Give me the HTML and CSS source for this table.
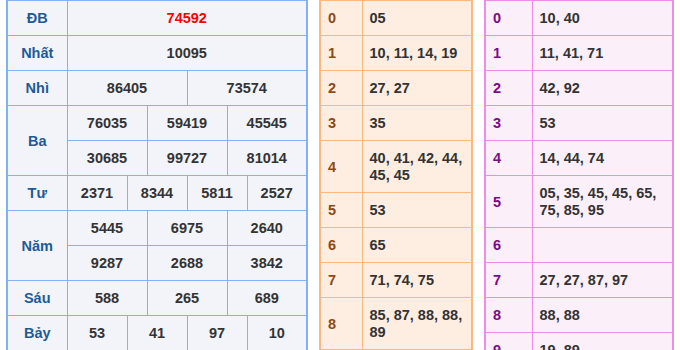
FILE: index.html
```html
<!DOCTYPE html>
<html lang="vi">
<head>
  <meta charset="UTF-8">
  <title>Kết quả xổ số miền Bắc</title>
  <link rel="stylesheet" href="styles.css">
</head>
<body>

  <div class="board">

    <table class="kq">
      <colgroup>
        <col class="col-label">
        <col><col><col><col><col><col><col><col><col><col><col><col>
      </colgroup>
      <tr><th>ĐB</th><td colspan="12" class="db">74592</td></tr>
      <tr><th>Nhất</th><td colspan="12">10095</td></tr>
      <tr><th>Nhì</th><td colspan="6">86405</td><td colspan="6">73574</td></tr>
      <tr><th rowspan="2">Ba</th><td colspan="4">76035</td><td colspan="4">59419</td><td colspan="4">45545</td></tr>
      <tr><td colspan="4">30685</td><td colspan="4">99727</td><td colspan="4">81014</td></tr>
      <tr><th>Tư</th><td colspan="3">2371</td><td colspan="3">8344</td><td colspan="3">5811</td><td colspan="3">2527</td></tr>
      <tr><th rowspan="2">Năm</th><td colspan="4">5445</td><td colspan="4">6975</td><td colspan="4">2640</td></tr>
      <tr><td colspan="4">9287</td><td colspan="4">2688</td><td colspan="4">3842</td></tr>
      <tr><th>Sáu</th><td colspan="4">588</td><td colspan="4">265</td><td colspan="4">689</td></tr>
      <tr><th>Bảy</th><td colspan="3">53</td><td colspan="3">41</td><td colspan="3">97</td><td colspan="3">10</td></tr>
    </table>

    <table class="loto dau">
      <colgroup><col class="col-num"><col></colgroup>
      <tr><th>0</th><td>05</td></tr>
      <tr><th>1</th><td>10, 11, 14, 19</td></tr>
      <tr><th>2</th><td>27, 27</td></tr>
      <tr><th>3</th><td>35</td></tr>
      <tr><th>4</th><td>40, 41, 42, 44, 45, 45</td></tr>
      <tr><th>5</th><td>53</td></tr>
      <tr><th>6</th><td>65</td></tr>
      <tr><th>7</th><td>71, 74, 75</td></tr>
      <tr><th>8</th><td>85, 87, 88, 88, 89</td></tr>
      <tr><th>9</th><td>92, 95, 97</td></tr>
    </table>

    <table class="loto duoi">
      <colgroup><col class="col-num"><col></colgroup>
      <tr><th>0</th><td>10, 40</td></tr>
      <tr><th>1</th><td>11, 41, 71</td></tr>
      <tr><th>2</th><td>42, 92</td></tr>
      <tr><th>3</th><td>53</td></tr>
      <tr><th>4</th><td>14, 44, 74</td></tr>
      <tr><th>5</th><td>05, 35, 45, 45, 65, 75, 85, 95</td></tr>
      <tr><th>6</th><td></td></tr>
      <tr><th>7</th><td>27, 27, 87, 97</td></tr>
      <tr><th>8</th><td>88, 88</td></tr>
      <tr><th>9</th><td>19, 89</td></tr>
    </table>

  </div>

</body>
</html>
```

FILE: styles.css
```css
body {
  margin: 0;
  padding: 0;
  background-color: #ffffff;
  font-family: 'Liberation Sans', Arial, sans-serif;
  overflow: hidden;
}

.board {
  display: flex;
  align-items: flex-start;
  gap: 11px;
  padding-left: 6px;
  margin-top: -1px;
}

table {
  border-collapse: collapse;
  table-layout: fixed;
  font-size: 14.5px;
  font-weight: bold;
  line-height: 17px;
  color: #333333;
}

th, td {
  padding: 9px 7px 8px;
}

/* bảng kết quả */
.kq {
  width: 302px;
  background-color: #f3f4f9;
  border: 2px solid #80b2f6;
}

.kq .col-label {
  width: 60px;
}

.kq th,
.kq td {
  border: 1px solid #80b2f6;
  text-align: center;
}

.kq th {
  color: #1d5b98;
}

.kq .db {
  color: #ff0000;
}

/* bảng lô tô */
.loto th,
.loto td {
  text-align: left;
}

.dau {
  width: 154px;
  background-color: #fdeee1;
  border: 2px solid #f9b87c;
}

.dau .col-num {
  width: 42px;
}

.dau th,
.dau td {
  border: 1px solid #f9b87c;
}

.dau th {
  color: #8d4a14;
}

.duoi {
  width: 190px;
  background-color: #fbeffa;
  border: 2px solid #ee8de6;
}

.duoi .col-num {
  width: 47px;
}

.duoi th,
.duoi td {
  border: 1px solid #ee8de6;
}

.duoi th {
  color: #7d0a86;
}
```
